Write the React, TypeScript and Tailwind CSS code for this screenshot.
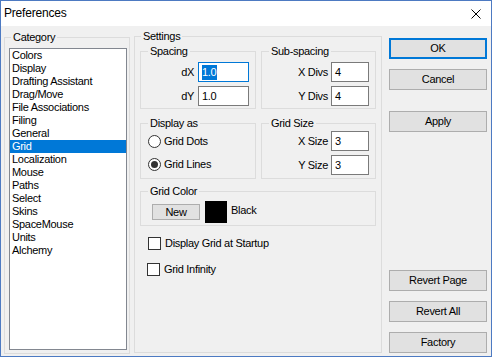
import React from "react";

const categories = [
  "Colors",
  "Display",
  "Drafting Assistant",
  "Drag/Move",
  "File Associations",
  "Filing",
  "General",
  "Grid",
  "Localization",
  "Mouse",
  "Paths",
  "Select",
  "Skins",
  "SpaceMouse",
  "Units",
  "Alchemy",
];

const Field: React.FC<{ value: string; focused?: boolean }> = ({ value, focused }) => (
  <div
    className={`h-[20px] bg-white border flex items-center pl-[3px] ${
      focused ? "border-[#0078d7]" : "border-[#7a7a7a]"
    }`}
  >
    {focused ? (
      <span className="bg-[#0078d7] text-white leading-[15px] pr-[1px]">{value}</span>
    ) : (
      <span>{value}</span>
    )}
  </div>
);

const Button: React.FC<{ label: string; primary?: boolean; className?: string }> = ({
  label,
  primary,
  className = "",
}) => (
  <div
    className={`h-[21px] w-full flex items-center justify-center bg-[#e1e1e1] ${
      primary ? "border-2 border-[#0078d7]" : "border border-[#adadad]"
    } ${className}`}
  >
    {label}
  </div>
);

const App: React.FC = () => {
  return (
    <div className="w-[492px] h-[357px] border border-[#4d7ac2] flex flex-col bg-[#f0f0f0] text-black text-[11px] leading-[13px] tracking-[-0.3px] font-['Liberation_Sans',Arial,sans-serif] overflow-hidden">
      {/* Title bar */}
      <div className="h-[25px] bg-white flex items-center justify-between pl-[3px] pr-[10px]">
        <span className="text-[12px] tracking-[-0.2px]">Preferences</span>
        <svg width="10" height="10" viewBox="0 0 10 10" className="block">
          <path d="M0.5 0.5 L9.5 9.5 M9.5 0.5 L0.5 9.5" stroke="#000" strokeWidth="1" />
        </svg>
      </div>

      {/* Body */}
      <div className="flex-1 flex items-start pl-[3px] pr-[4px] gap-[4px]">
        {/* Category */}
        <fieldset className="mt-[5px] w-[126px] border border-[#dcdcdc] pl-[4px] pr-[2px] pb-[3px]">
          <legend className="ml-[2px] px-[2px]">Category</legend>
          <div className="mt-[4px] h-[302px] bg-white border border-[#828790]">
            {categories.map((c) => (
              <div
                key={c}
                className={`h-[13px] pl-[2px] whitespace-nowrap ${
                  c === "Grid" ? "bg-[#0078d7] text-white" : ""
                }`}
              >
                {c}
              </div>
            ))}
          </div>
        </fieldset>

        {/* Settings */}
        <fieldset className="mt-[4px] w-[248px] h-[323px] border border-[#dcdcdc] px-[5px] flex flex-col">
          <legend className="ml-[1px] px-[2px]">Settings</legend>

          <div className="mt-[2px] flex gap-[5px]">
            <fieldset className="w-[116px] h-[64px] border border-[#dcdcdc] pr-[6px]">
              <legend className="ml-[7px] px-[2px]">Spacing</legend>
              <div className="mt-[4px] flex flex-col items-end gap-[4px]">
                <div className="flex items-center gap-[4px]">
                  <span>dX</span>
                  <div className="w-[51px]">
                    <Field value="1.0" focused />
                  </div>
                </div>
                <div className="flex items-center gap-[4px]">
                  <span>dY</span>
                  <div className="w-[51px]">
                    <Field value="1.0" />
                  </div>
                </div>
              </div>
            </fieldset>
            <fieldset className="w-[115px] h-[64px] border border-[#dcdcdc] pr-[6px]">
              <legend className="ml-[7px] px-[2px]">Sub-spacing</legend>
              <div className="mt-[4px] flex flex-col items-end gap-[4px]">
                <div className="flex items-center gap-[3px]">
                  <span>X Divs</span>
                  <div className="w-[38px]">
                    <Field value="4" />
                  </div>
                </div>
                <div className="flex items-center gap-[3px]">
                  <span>Y Divs</span>
                  <div className="w-[38px]">
                    <Field value="4" />
                  </div>
                </div>
              </div>
            </fieldset>
          </div>

          <div className="mt-[8px] flex gap-[5px]">
            <fieldset className="w-[116px] h-[62px] border border-[#dcdcdc] pl-[7px]">
              <legend className="ml-[0px] px-[2px]">Display as</legend>
              <div className="mt-[1px] flex flex-col gap-[3px]">
                <div className="h-[20px] flex items-center gap-[3px]">
                  <span className="w-[13px] h-[13px] rounded-full border border-[#333] bg-white" />
                  <span>Grid Dots</span>
                </div>
                <div className="h-[20px] flex items-center gap-[3px]">
                  <span className="w-[13px] h-[13px] rounded-full border border-[#333] bg-white flex items-center justify-center">
                    <span className="w-[7px] h-[7px] rounded-full bg-[#333]" />
                  </span>
                  <span>Grid Lines</span>
                </div>
              </div>
            </fieldset>
            <fieldset className="w-[115px] h-[62px] border border-[#dcdcdc] pr-[6px]">
              <legend className="ml-[7px] px-[2px]">Grid Size</legend>
              <div className="mt-[1px] flex flex-col items-end gap-[4px]">
                <div className="flex items-center gap-[3px]">
                  <span>X Size</span>
                  <div className="w-[38px]">
                    <Field value="3" />
                  </div>
                </div>
                <div className="flex items-center gap-[3px]">
                  <span>Y Size</span>
                  <div className="w-[38px]">
                    <Field value="3" />
                  </div>
                </div>
              </div>
            </fieldset>
          </div>

          <fieldset className="mt-[6px] h-[41px] border border-[#dcdcdc] pl-[11px]">
            <legend className="ml-[-4px] px-[2px]">Grid Color</legend>
            <div className="mt-[3px] h-[22px] flex items-center">
              <div className="w-[48px] h-[16px] bg-[#e1e1e1] border border-[#adadad] flex items-center justify-center">
                New
              </div>
              <div className="ml-[5px] w-[22px] h-[22px] bg-black" />
              <span className="ml-[4px] -mt-[3px]">Black</span>
            </div>
          </fieldset>

          <div className="mt-[7px] h-[20px] pl-[8px] flex items-center gap-[4px]">
            <span className="w-[13px] h-[13px] border border-[#333] bg-white" />
            <span>Display Grid at Startup</span>
          </div>
          <div className="mt-[6px] h-[20px] pl-[7px] flex items-center gap-[4px]">
            <span className="w-[13px] h-[13px] border border-[#333] bg-white" />
            <span>Grid Infinity</span>
          </div>
        </fieldset>

        {/* Buttons */}
        <div className="ml-[3px] w-[98px] h-full flex flex-col pt-[12px] pb-[3px]">
          <Button label="OK" primary />
          <Button label="Cancel" className="mt-[10px]" />
          <Button label="Apply" className="mt-[21px]" />
          <div className="flex-1" />
          <Button label="Revert Page" />
          <Button label="Revert All" className="mt-[10px]" />
          <Button label="Factory" className="mt-[10px]" />
        </div>
      </div>
    </div>
  );
};

export default App;
